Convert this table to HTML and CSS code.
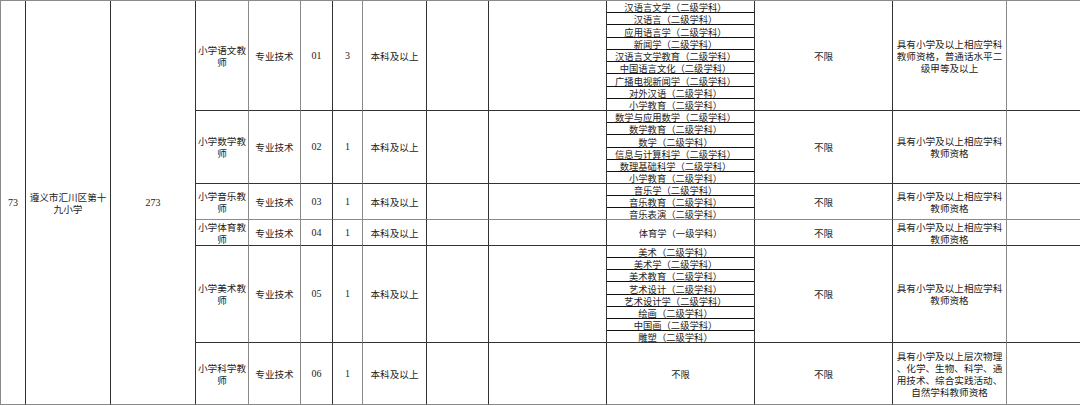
FILE: index.html
```html
<!DOCTYPE html>
<html lang="zh-CN">
<head>
<meta charset="utf-8">
<title>岗位表</title>
<link rel="stylesheet" href="styles.css">
</head>
<body>
<div class="sheet">
  <div class="cell c1 all num">73</div>
  <div class="cell c2 all">遵义市汇川区第十九小学</div>
  <div class="cell c3 all num">273</div>

  <!-- row 1 -->
  <div class="cell c4">小学语文教师</div>
  <div class="cell c5">专业技术</div>
  <div class="cell c6 num">01</div>
  <div class="cell c7 num">3</div>
  <div class="cell c8">本科及以上</div>
  <div class="cell c9"></div>
  <div class="cell c10"></div>
  <div class="cell c11 list">
    <div class="m">汉语言文学（二级学科）</div>
    <div class="m">汉语言（二级学科）</div>
    <div class="m">应用语言学（二级学科）</div>
    <div class="m">新闻学（二级学科）</div>
    <div class="m">汉语言文学教育（二级学科）</div>
    <div class="m">中国语言文化（二级学科）</div>
    <div class="m">广播电视新闻学（二级学科）</div>
    <div class="m">对外汉语（二级学科）</div>
    <div class="m">小学教育（二级学科）</div>
  </div>
  <div class="cell c12">不限</div>
  <div class="cell c13">具有小学及以上相应学科教师资格，普通话水平二级甲等及以上</div>
  <div class="cell c14"></div>

  <!-- row 2 -->
  <div class="cell c4">小学数学教师</div>
  <div class="cell c5">专业技术</div>
  <div class="cell c6 num">02</div>
  <div class="cell c7 num">1</div>
  <div class="cell c8">本科及以上</div>
  <div class="cell c9"></div>
  <div class="cell c10"></div>
  <div class="cell c11 list">
    <div class="m">数学与应用数学（二级学科）</div>
    <div class="m">数学教育（二级学科）</div>
    <div class="m">数学（二级学科）</div>
    <div class="m">信息与计算科学（二级学科）</div>
    <div class="m">数理基础科学（二级学科）</div>
    <div class="m">小学教育（二级学科）</div>
  </div>
  <div class="cell c12">不限</div>
  <div class="cell c13">具有小学及以上相应学科教师资格</div>
  <div class="cell c14"></div>

  <!-- row 3 -->
  <div class="cell c4 lite">小学音乐教师</div>
  <div class="cell c5 lite">专业技术</div>
  <div class="cell c6 num lite">03</div>
  <div class="cell c7 num lite">1</div>
  <div class="cell c8 lite">本科及以上</div>
  <div class="cell c9 lite"></div>
  <div class="cell c10 lite"></div>
  <div class="cell c11 list lite">
    <div class="m">音乐学（二级学科）</div>
    <div class="m">音乐教育（二级学科）</div>
    <div class="m">音乐表演（二级学科）</div>
  </div>
  <div class="cell c12 lite">不限</div>
  <div class="cell c13 lite">具有小学及以上相应学科教师资格</div>
  <div class="cell c14 lite"></div>

  <!-- row 4 -->
  <div class="cell c4">小学体育教师</div>
  <div class="cell c5">专业技术</div>
  <div class="cell c6 num">04</div>
  <div class="cell c7 num">1</div>
  <div class="cell c8">本科及以上</div>
  <div class="cell c9"></div>
  <div class="cell c10"></div>
  <div class="cell c11 small">体育学（一级学科）</div>
  <div class="cell c12">不限</div>
  <div class="cell c13">具有小学及以上相应学科教师资格</div>
  <div class="cell c14"></div>

  <!-- row 5 -->
  <div class="cell c4">小学美术教师</div>
  <div class="cell c5">专业技术</div>
  <div class="cell c6 num">05</div>
  <div class="cell c7 num">1</div>
  <div class="cell c8">本科及以上</div>
  <div class="cell c9"></div>
  <div class="cell c10"></div>
  <div class="cell c11 list">
    <div class="m">美术（二级学科）</div>
    <div class="m">美术学（二级学科）</div>
    <div class="m">美术教育（二级学科）</div>
    <div class="m">艺术设计（二级学科）</div>
    <div class="m">艺术设计学（二级学科）</div>
    <div class="m">绘画（二级学科）</div>
    <div class="m">中国画（二级学科）</div>
    <div class="m">雕塑（二级学科）</div>
  </div>
  <div class="cell c12">不限</div>
  <div class="cell c13">具有小学及以上相应学科教师资格</div>
  <div class="cell c14"></div>

  <!-- row 6 -->
  <div class="cell c4 last">小学科学教师</div>
  <div class="cell c5 last">专业技术</div>
  <div class="cell c6 num last">06</div>
  <div class="cell c7 num last">1</div>
  <div class="cell c8 last">本科及以上</div>
  <div class="cell c9 last"></div>
  <div class="cell c10 last"></div>
  <div class="cell c11 small last">不限</div>
  <div class="cell c12 last">不限</div>
  <div class="cell c13 last">具有小学及以上层次物理<br>、化学、生物、科学、通<br>用技术、综合实践活动、<br>自然学科教师资格</div>
  <div class="cell c14 last"></div>
</div>
</body>
</html>
```

FILE: styles.css
```css
html, body {
  margin: 0;
  padding: 0;
  background: #ffffff;
}

body {
  font-family: "Noto Sans CJK SC", "Noto Sans", sans-serif;
  font-size: 9.6px;
  line-height: 12px;
  color: #222222;
}

.sheet {
  display: grid;
  grid-template-columns: 25px 85px 85px 53px 52px 32px 30px 64px 62px 118px 148px 138px 114px 73px;
  grid-template-rows: 110px 73px 36px 26px 97px 62px;
  width: 1079px;
  border-left: 1px solid #8a8a8a;
  border-top: 1px solid #8a8a8a;
}

.cell {
  box-sizing: border-box;
  border-right: 1px solid #333333;
  border-bottom: 1px solid #333333;
  display: flex;
  align-items: center;
  justify-content: center;
  text-align: center;
  min-width: 0;
  min-height: 0;
}

.all {
  grid-row: span 6;
  border-bottom-color: #8a8a8a;
}

.num {
  font-family: "Liberation Serif", "Noto Sans CJK SC", serif;
  font-size: 10px;
}

.c4,
.c5,
.c7,
.c13 {
  border-right-color: #8a8a8a;
}

.c14 {
  border-right: none;
}

.lite {
  border-bottom-color: #8a8a8a;
}

.last {
  border-bottom-color: #8a8a8a;
}

.small {
  font-size: 9.3px;
}

.list {
  flex-direction: column;
  align-items: stretch;
  justify-content: stretch;
  font-size: 9.3px;
  line-height: 10px;
}

.list .m {
  flex: 1 1 0;
  min-height: 0;
  display: flex;
  align-items: flex-end;
  justify-content: center;
  border-bottom: 1px solid #111111;
  white-space: nowrap;
  padding-right: 10px;
}

.list .m:last-child {
  border-bottom: none;
}
```
